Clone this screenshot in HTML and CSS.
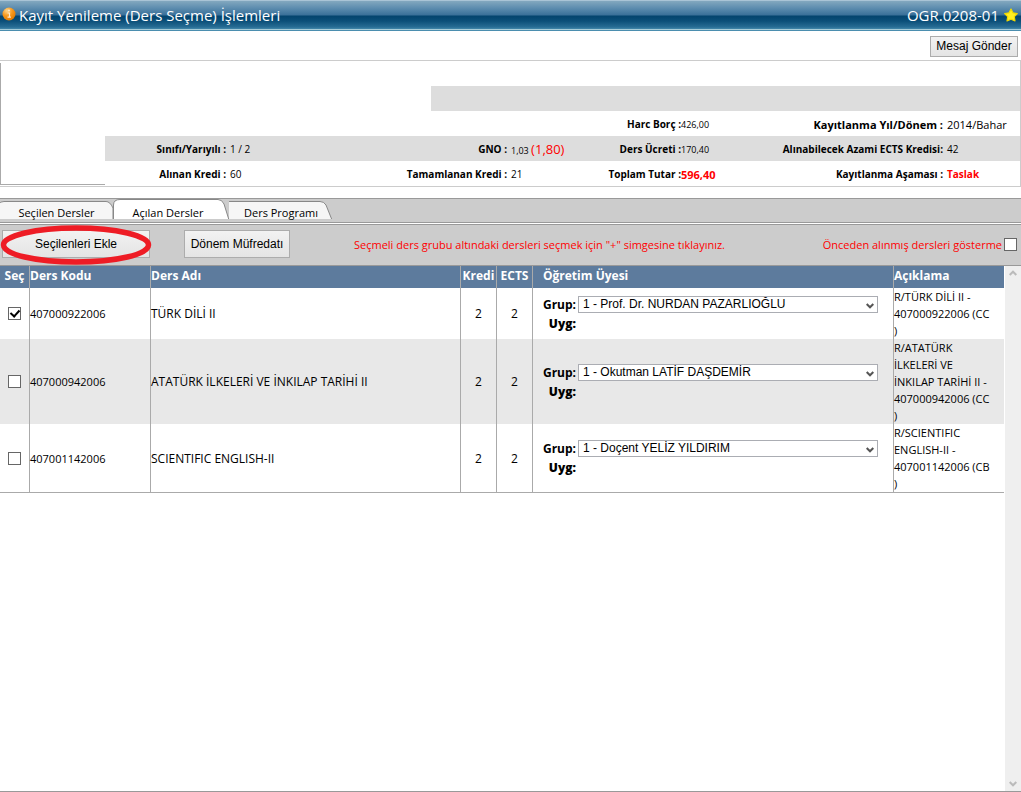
FILE: index.html
```html
<!DOCTYPE html>
<html lang="tr">
<head>
<meta charset="utf-8">
<title>Kayıt Yenileme (Ders Seçme) İşlemleri</title>
<link rel="stylesheet" href="styles.css">
</head>
<body>
<header class="titlebar">
  <svg class="info-icon" viewBox="0 0 14 14" aria-hidden="true">
    <defs><radialGradient id="orange" cx="35%" cy="25%" r="80%"><stop offset="0" stop-color="#ffd58a"/><stop offset=".5" stop-color="#f7981d"/><stop offset="1" stop-color="#e07800"/></radialGradient></defs>
    <circle cx="7" cy="7" r="6.5" fill="url(#orange)"/>
    <path d="M5.5 6h2v3.800M5.500 10.200h3.400" fill="none" stroke="#ffe9cc" stroke-width="1.200"/>
    <circle cx="7" cy="3.600" r="1" fill="#ffe9cc"/>
  </svg>
  <h1 class="title">Kayıt Yenileme (Ders Seçme) İşlemleri</h1>
  <span class="code">OGR.0208-01</span>
  <svg class="star-icon" viewBox="0 0 14 14" aria-hidden="true">
    <path d="M7 1l2 3.800 4.300.7-3 3.100.7 4.400-4-1.800L3 13l.7-4.400-3-3.100L5 4.800z" fill="#ffee22" stroke="#f0d800" stroke-width="1.200" stroke-linejoin="round"/>
  </svg>
</header>

<div class="actions"><button class="btn btn-small" type="button">Mesaj Gönder</button></div>

<section class="summary">
  <div class="photo"></div>
  <div class="facts">
    <div class="fact-row"></div>
    <div class="fact-row shaded short"></div>
    <div class="fact-row">
      <b class="label"></b><span></span><b class="label"></b><span></span>
      <b class="label tight">Harc Borç :</b><span class="small">426,00</span>
      <b class="label big">Kayıtlanma Yıl/Dönem :</b><span class="big">2014/Bahar</span>
    </div>
    <div class="fact-row shaded">
      <b class="label">Sınıfı/Yarıyılı :</b><span>1 / 2</span>
      <b class="label">GNO :</b><span class="small">1,03 <span class="gno">(1,80)</span></span>
      <b class="label tight">Ders Ücreti :</b><span class="small">170,40</span>
      <b class="label">Alınabilecek Azami ECTS Kredisi:</b><span>42</span>
    </div>
    <div class="fact-row">
      <b class="label">Alınan Kredi :</b><span>60</span>
      <b class="label">Tamamlanan Kredi :</b><span>21</span>
      <b class="label tight">Toplam Tutar :</b><b class="alert big">596,40</b>
      <b class="label">Kayıtlanma Aşaması :</b><b class="alert">Taslak</b>
    </div>
  </div>
</section>

<nav class="tabs">
  <button class="tab" type="button">
    <svg class="tab-shape" viewBox="0 0 114 20" preserveAspectRatio="none" aria-hidden="true"><path d="M-1 5Q0 2.500 4 2.500H107Q111 2.500 114 9V21H-1z"/></svg>
    <span>Seçilen Dersler</span></button>
  <button class="tab active" type="button">
    <svg class="tab-shape" viewBox="0 0 116 20" preserveAspectRatio="none" aria-hidden="true"><path d="M.5 21V6Q.5 .5 7 .5H105Q109 .5 111 5L116 21"/></svg>
    <span>Açılan Dersler</span></button>
  <button class="tab" type="button">
    <svg class="tab-shape" viewBox="0 0 104 20" preserveAspectRatio="none" aria-hidden="true"><path d="M0 21L-5 5Q-5 2.500 0 2.500H91Q95 2.500 97 6L103 21"/></svg>
    <span>Ders Programı</span></button>
</nav>

<div class="toolbar">
  <div class="marked">
    <button class="btn btn-add" type="button">Seçilenleri Ekle</button>
    <svg class="ring" viewBox="0 0 152 40" preserveAspectRatio="none" aria-hidden="true"><ellipse cx="76" cy="20" rx="72.500" ry="17" fill="none" stroke="#ee1c25" stroke-width="5.500"/></svg>
  </div>
  <button class="btn btn-plan" type="button">Dönem Müfredatı</button>
  <p class="hint">Seçmeli ders grubu altındaki dersleri seçmek için "+" simgesine tıklayınız.</p>
  <label class="filter" for="hide">Önceden alınmış dersleri gösterme</label><input class="check" id="hide" type="checkbox">
</div>

<main class="content">
  <div class="table-area">
    <table class="courses">
      <colgroup><col class="c-sel"><col class="c-code"><col class="c-name"><col class="c-num"><col class="c-num"><col class="c-staff"><col class="c-note"></colgroup>
      <thead>
        <tr><th class="center">Seç</th><th>Ders Kodu</th><th>Ders Adı</th><th class="center">Kredi</th><th class="center">ECTS</th><th class="staff-head">Öğretim Üyesi</th><th>Açıklama</th></tr>
      </thead>
      <tbody>
        <tr>
          <td class="center"><input class="check" type="checkbox" checked aria-label="407000922006"></td>
          <td class="fine">407000922006</td><td>TÜRK DİLİ II</td><td class="center">2</td><td class="center">2</td>
          <td><div class="staff"><label for="g1">Grup:</label><div class="pick"><select id="g1"><option>1 - Prof. Dr. NURDAN PAZARLIOĞLU</option></select><svg class="chev" viewBox="0 0 8 6" aria-hidden="true"><path d="M.7 1L4 4.300 7.300 1"/></svg></div></div><div class="staff"><b>Uyg:</b></div></td>
          <td class="fine">R/TÜRK DİLİ II -<br>407000922006 (CC<br>)</td>
        </tr>
        <tr>
          <td class="center"><input class="check" type="checkbox" aria-label="407000942006"></td>
          <td class="fine">407000942006</td><td>ATATÜRK İLKELERİ VE İNKILAP TARİHİ II</td><td class="center">2</td><td class="center">2</td>
          <td><div class="staff"><label for="g2">Grup:</label><div class="pick"><select id="g2"><option>1 - Okutman LATİF DAŞDEMİR</option></select><svg class="chev" viewBox="0 0 8 6" aria-hidden="true"><path d="M.7 1L4 4.300 7.300 1"/></svg></div></div><div class="staff"><b>Uyg:</b></div></td>
          <td class="fine">R/ATATÜRK<br>İLKELERİ VE<br>İNKILAP TARİHİ II -<br>407000942006 (CC<br>)</td>
        </tr>
        <tr>
          <td class="center"><input class="check" type="checkbox" aria-label="407001142006"></td>
          <td class="fine">407001142006</td><td>SCIENTIFIC ENGLISH-II</td><td class="center">2</td><td class="center">2</td>
          <td><div class="staff"><label for="g3">Grup:</label><div class="pick"><select id="g3"><option>1 - Doçent YELİZ YILDIRIM</option></select><svg class="chev" viewBox="0 0 8 6" aria-hidden="true"><path d="M.7 1L4 4.300 7.300 1"/></svg></div></div><div class="staff"><b>Uyg:</b></div></td>
          <td class="fine">R/SCIENTIFIC<br>ENGLISH-II -<br>407001142006 (CB<br>)</td>
        </tr>
      </tbody>
    </table>
  </div>
  <div class="scrollbar" aria-hidden="true">
    <svg class="arrow" viewBox="0 0 8 6"><path d="M.7 5L4 1.700 7.300 5"/></svg>
    <svg class="arrow" viewBox="0 0 8 6"><path d="M.7 1L4 4.300 7.300 1"/></svg>
  </div>
</main>
</body>
</html>
```
FILE: styles.css
```css
* { box-sizing: border-box; }
body {
  margin: 0;
  min-height: 100vh;
  display: flex;
  flex-direction: column;
  background: #fff;
  color: #000;
  font: 12px/17px "Open Sans", "Noto Sans", sans-serif;
}
button, select, input { font: inherit; color: inherit; margin: 0; }

.titlebar {
  display: flex;
  align-items: center;
  height: 31px;
  padding: 0 3px 2px 2px;
  border-top: 1px solid #a9c4d6;
  background: linear-gradient(#83a8bf 0, #5d8daf 7px, #3a7099 14px, #04446e 15px, #0b4f79 20px, #276c94 26px, #4288aa 28px, #a5cbd8 28px, #a5cbd8 29px, #4b8eaf 29px);
  color: #fff;
}
.info-icon { width: 14px; height: 14px; margin: 0 3px 3px 0; }
.star-icon { width: 14px; height: 14px; margin-left: 5px; }
.title { flex: 1; margin: 0; font-size: 15px; font-weight: 400; line-height: 28px; }
.code { font-size: 15px; line-height: 28px; }

.actions { display: flex; justify-content: flex-end; height: 29px; padding: 5px 3px 3px; }
.btn {
  padding: 0;
  border: 1px solid #acacac;
  background: linear-gradient(#f2f2f2, #e4e4e4);
  font: 12px/17px "Liberation Sans", sans-serif;
}
.btn-small { width: 88px; }

.summary {
  display: flex;
  border: 1px solid #ccc;
  border-left: 0;
  font-size: 10px;
}
.photo { width: 105px; margin: 2px 0 1px; border: solid #aaa; border-width: 0 0 1px 1px; }
.facts { flex: 1; }
.fact-row {
  display: grid;
  grid-template-columns: minmax(0, 123fr) minmax(0, 152fr) minmax(0, 129fr) minmax(0, 80fr) minmax(0, 92fr) minmax(0, 82fr) minmax(0, 182fr) minmax(0, 75fr);
  height: 25px;
  padding-top: 1px;
  line-height: 25px;
  white-space: nowrap;
}
.shaded { background: #ddd; }
.short { margin-left: 326px; }
.label { padding-right: 2px; text-align: right; }
.label + span, .label + b { padding-left: 2px; }
.label.tight { padding-right: 0; }
.label.tight + span, .label.tight + b { padding-left: 0; }
.small { font-size: 9px; }
.label.small { font-size: 10px; }
.big { font-size: 11px; }
.gno { font-size: 13px; color: #f00; }
.alert { color: #f00; }

.tabs {
  display: flex;
  height: 25px;
  margin-top: 11px;
  border: solid #999;
  border-width: 1px 0;
  background: #ccc;
}
.tab {
  position: relative;
  height: 20px;
  width: 104px;
  padding: 7px 0 0;
  border: 0;
  background: none;
  font-size: 11px;
  line-height: 13px;
}
.tab:nth-child(1) { width: 113px; }
.tab:nth-child(2) { width: 116px; padding-right: 6px; }
.tab span { position: relative; }
.tab-shape { position: absolute; inset: 0; width: 100%; height: 20px; }
.tab-shape path { fill: #f6f6f6; stroke: #888; }
.active .tab-shape path { fill: #fff; }

.toolbar {
  display: flex;
  align-items: center;
  height: 42px;
  margin-top: 1px;
  padding: 0 4px 2px 2px;
  border: solid #999;
  border-width: 1px 0;
  background: #ccc;
  color: #f00;
  font-size: 11px;
}
.toolbar .btn { height: 28px; color: #000; }
.marked { position: relative; margin-right: 34px; }
.btn-add { display: block; width: 148px; }
.btn-plan { width: 106px; }
.ring { position: absolute; left: -2px; top: -5px; width: 152px; height: 40px; pointer-events: none; }
.hint { flex: 1; margin: 0 0 0 64px; }
.check {
  appearance: none;
  display: block;
  width: 13px;
  height: 13px;
  border: 1px solid #666;
  background: #fff;
}
.check:checked::after {
  content: "";
  display: block;
  width: 4px;
  height: 7px;
  margin: 0 auto;
  border: solid #000;
  border-width: 0 2px 2px 0;
  transform: rotate(42deg);
}
.filter { margin-right: 2px; }

.content { flex: 1; display: flex; border-bottom: 1px solid #999; }
.table-area { flex: 1; margin-right: 1px; }
.courses { width: 100%; table-layout: fixed; border-collapse: separate; border-spacing: 0; border-bottom: 1px solid #aaa; }
.c-sel { width: 29px; }
.c-code { width: 121px; }
.c-name { width: 310px; }
.c-num { width: 36px; }
.c-note { width: 111px; }
.courses th, .courses td { padding: 0; text-align: left; white-space: nowrap; border-left: 1px solid #aaa; }
.courses th:first-child, .courses td:first-child { border-left: 0; }
.courses thead tr { height: 22px; background: #5d7b9d; color: #fff; }
.courses th { padding-bottom: 3px; }
.courses .staff-head { padding-left: 10px; }
.courses tbody tr:nth-child(2) { background: #e8e8e8; }
.courses .center { text-align: center; }
.courses .fine { font-size: 11px; }
.courses .check { margin: 0 auto; }
.staff { display: flex; align-items: center; height: 19px; gap: 2px; padding: 0 15px 0 0; font-weight: 700; }
.staff label, .staff b { width: 43px; text-align: right; }
.pick { position: relative; flex: 1; height: 17px; }
.pick select {
  appearance: none;
  display: block;
  width: 100%;
  height: 17px;
  padding: 0 20px 0 4px;
  border: 1px solid #abadb3;
  border-radius: 0;
  background: #fff;
  font: 12px/15px "Liberation Sans", sans-serif;
}
.chev { position: absolute; right: 4px; top: 7px; width: 8px; height: 6px; }
.chev path { fill: none; stroke: #555; stroke-width: 2; }
.scrollbar {
  width: 16px;
  display: flex;
  flex-direction: column;
  justify-content: space-between;
  align-items: center;
  padding: 4px 0;
  background: #efefef;
}
.arrow { width: 8px; height: 6px; }
.arrow path { fill: none; stroke: #bbb; stroke-width: 2; }
```
